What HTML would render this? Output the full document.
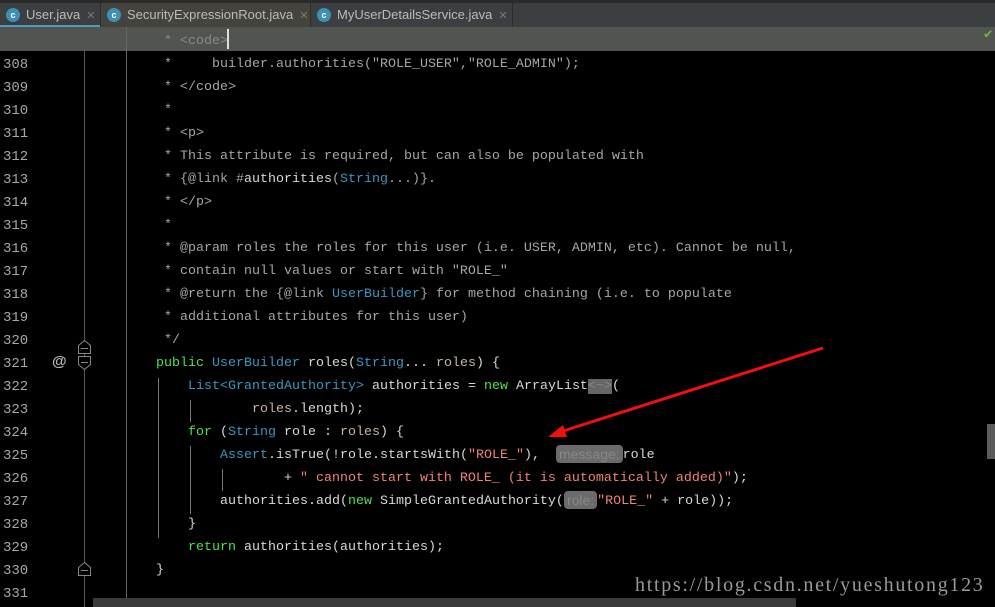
<!DOCTYPE html>
<html><head><meta charset="utf-8"><style>
body{margin:0;width:995px;height:607px;background:#000;overflow:hidden;position:relative;font-family:"Liberation Mono",monospace;}
.tabs{position:absolute;left:0;top:0;width:995px;height:27px;background:#3c3f41;border-top:3px solid #2b2b2b;box-sizing:border-box;}
.tab{position:absolute;top:0;height:24px;font:13px "Liberation Sans",sans-serif;color:#bbb;line-height:24px;box-sizing:border-box;padding-left:26px;border-right:1px solid #2b2b2b}
.tab .ic{position:absolute;left:6px;top:5px;width:14px;height:14px;border-radius:50%;background:#3d8fb4;color:#fff;font:bold 9px "Liberation Sans";text-align:center;line-height:14px}
.tab .x{color:#777;margin-left:6px;font-size:11px}
.hl{position:absolute;left:0;top:27px;width:995px;height:24px;background:#52544f}
.row{position:absolute;left:0;height:23px;line-height:23px;font-size:13.33px;white-space:pre;color:#d8d8d8}
.ln{position:absolute;left:3px;color:#a8a8a8;font-size:14px}
.c{color:#a6a6a6}.k{color:#4fe04f}.t{color:#3e95c0}.s{color:#ee8377}.p{color:#c9b3a6}
.hint{display:inline-block;background:#6b6b6b;color:#888;border-radius:4px;font-family:"Liberation Sans";font-size:14px;line-height:18px;padding:0 3px;vertical-align:middle}
.vl{position:absolute;width:1px;background:#555}
</style></head><body>
<div class="tabs">
<div class="tab" style="left:0;width:101px;background:#3c3f41">
<span class="ic">c</span>User.java<span class="x">✕</span></div>
<div style="position:absolute;left:0;top:22px;width:100px;height:3px;background:#4a9cc4"></div>
<div class="tab" style="left:101px;width:210px;background:#45433d"><span class="ic">c</span>SecurityExpressionRoot.java<span class="x">✕</span></div>
<div class="tab" style="left:311px;width:202px"><span class="ic">c</span>MyUserDetailsService.java<span class="x">✕</span></div>
</div>
<div class="hl"></div>
<div style="position:absolute;left:227px;top:29px;width:2px;height:20px;background:#ddd"></div>
<div style="position:absolute;left:984px;top:26px;color:#5fbf3f;font-size:14px">✔</div>
<div class="vl" style="left:84px;top:51px;height:556px"></div>
<div class="vl" style="left:126px;top:27px;height:580px;background:#666"></div>
<div class="vl" style="left:158px;top:378px;height:160px;background:#777"></div>
<div class="vl" style="left:190px;top:400px;height:22px;background:#777"></div>
<div class="vl" style="left:190px;top:446px;height:68px;background:#777"></div>
<div class="vl" style="left:222px;top:469px;height:22px;background:#777"></div>
<div id="code"></div>
<div style="position:absolute;left:52px;top:353px;color:#bbb;font:bold 15px 'Liberation Sans'">@</div>
<svg style="position:absolute;left:0;top:0" width="995" height="607">
<g fill="#000" stroke="#888" stroke-width="1">
<path d="M78.5 345.5 L84.5 340.5 L90.5 345.5 V353.5 H78.5Z"/><line x1="81" y1="348.5" x2="88" y2="348.5"/>
<path d="M78.5 356.5 H90.5 V364.5 L84.5 369.5 L78.5 364.5Z"/><line x1="81" y1="362.5" x2="88" y2="362.5"/>
<path d="M78.5 567.5 L84.5 562.5 L90.5 567.5 V575.5 H78.5Z"/><line x1="81" y1="570.5" x2="88" y2="570.5"/>
</g>
<line x1="823" y1="348" x2="560" y2="432" stroke="#f01010" stroke-width="3"/>
<path d="M548 437 L563 425 L567 437Z" fill="#f01010"/>
<rect x="93" y="598" width="703" height="9" fill="#3a3a3a"/>
<rect x="987" y="424" width="8" height="35" fill="#5a5a5a"/>
</svg>
<div style="position:absolute;left:635px;top:574px;color:#9a9a9a;font:20px 'Liberation Serif',serif;letter-spacing:1.7px;white-space:nowrap">https://blog.csdn.net/yueshutong123</div>
<script>
var L=[
[307,'<span class="c" style="color:#888"> * &lt;code&gt;</span>'],
[308,'<span class="c"> *     builder.authorities("ROLE_USER","ROLE_ADMIN");</span>'],
[309,'<span class="c"> * &lt;/code&gt;</span>'],
[310,'<span class="c"> *</span>'],
[311,'<span class="c"> * &lt;p&gt;</span>'],
[312,'<span class="c"> * This attribute is required, but can also be populated with</span>'],
[313,'<span class="c"> * {@link #</span>authorities<span class="c">(</span><span class="t">String</span><span class="c">...)}.</span>'],
[314,'<span class="c"> * &lt;/p&gt;</span>'],
[315,'<span class="c"> *</span>'],
[316,'<span class="c"> * @param roles the roles for this user (i.e. USER, ADMIN, etc). Cannot be null,</span>'],
[317,'<span class="c"> * contain null values or start with "ROLE_"</span>'],
[318,'<span class="c"> * @return the {@link </span><span class="t">UserBuilder</span><span class="c">} for method chaining (i.e. to populate</span>'],
[319,'<span class="c"> * additional attributes for this user)</span>'],
[320,'<span class="c"> */</span>'],
[321,'<span class="k">public</span> <span class="t">UserBuilder</span> roles(<span class="t">String</span>... <span class="p">roles</span>) {'],
[322,'    <span class="t">List&lt;GrantedAuthority&gt;</span> authorities = <span class="k">new</span> ArrayList<span style="background:#666;color:#888">&lt;~&gt;</span>('],
[323,'            <span class="p">roles</span>.length);'],
[324,'    <span class="k">for</span> (<span class="t">String</span> role : <span class="p">roles</span>) {'],
[325,'        <span class="t">Assert</span>.isTrue(!role.startsWith(<span class="s">"ROLE_"</span>),  <span class="hint">message:</span>role'],
[326,'                + <span class="s">" cannot start with ROLE_ (it is automatically added)"</span>);'],
[327,'        authorities.add(<span class="k">new</span> SimpleGrantedAuthority(<span class="hint">role:</span><span class="s">"ROLE_"</span> + role));'],
[328,'    }'],
[329,'    <span class="k">return</span> authorities(authorities);'],
[330,'}'],
[331,'']];
var h='';L.forEach(function(r,i){var y=30+i*23;
h+='<div class="row" style="top:'+y+'px;left:156px">'+r[1]+'</div>';
if(i>0)h+='<div class="row ln" style="top:'+(y+1)+'px">'+r[0]+'</div>';});
document.getElementById('code').innerHTML=h;
</script>
</body></html>
